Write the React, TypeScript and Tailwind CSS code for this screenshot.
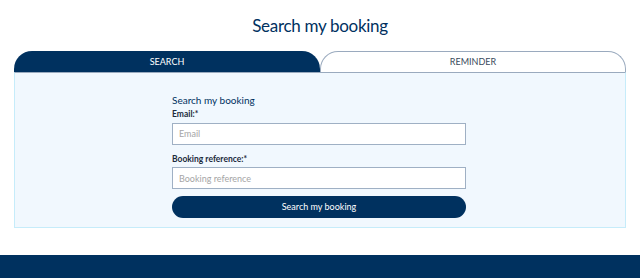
export default function App() {
    return (
        <div className="w-[640px] h-[278px] bg-white flex flex-col font-['Lato',sans-serif] text-[#00315f] overflow-hidden">
            <h1 className="text-center text-[17px] leading-none pt-[17px] h-[51px] tracking-[-0.3px]">
                Search my booking
            </h1>

            <div className="mx-[14px] w-[612px]">
                {/* Tabs */}
                <div className="flex h-[21px]">
                    <button className="w-[306px] bg-[#00315f] text-white text-[9px] rounded-t-[18px] uppercase">
                        Search
                    </button>
                    <button className="flex-1 bg-white border border-b-0 border-[#9aaabe] text-[#3a4a5c] text-[9px] rounded-t-[18px] uppercase">
                        Reminder
                    </button>
                </div>

                {/* Panel */}
                <div className="h-[156px] bg-[#f1f8fe] border border-[#c6ecfa] border-t-[#9aaabe] pt-[21px]">
                    <div className="w-[294px] ml-[157px]">
                        <p className="text-[10px] leading-[13px]">Search my booking</p>
                        <label className="block text-[8.5px] font-bold leading-[10px] mt-[2px] text-[#1c2b3c]">Email:*</label>
                        <input
                            placeholder="Email"
                            className="mt-[2px] w-full h-[22px] bg-white border border-[#9fb0c4] px-[6px] text-[9px] placeholder:text-[#a5a5a5] outline-none"
                        />
                        <label className="block text-[8.5px] font-bold leading-[10px] mt-[9px] text-[#1c2b3c]">Booking reference:*</label>
                        <input
                            placeholder="Booking reference"
                            className="mt-[2px] w-full h-[22px] bg-white border border-[#9fb0c4] px-[6px] text-[9px] placeholder:text-[#a5a5a5] outline-none"
                        />
                        <button className="mt-[7px] w-full h-[22px] rounded-full bg-[#00315f] text-white text-[9px]">
                            Search my booking
                        </button>
                    </div>
                </div>
            </div>

            <div className="mt-auto h-[23px] bg-[#00315f]"></div>
        </div>
    );
}
